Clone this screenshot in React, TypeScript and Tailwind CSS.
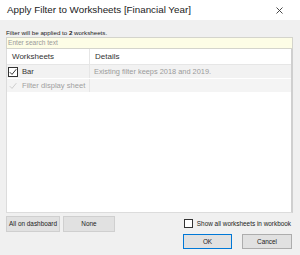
import React from "react";

const font = { fontFamily: '"Liberation Sans", Arial, sans-serif' };

function Check({ disabled }: { disabled?: boolean }) {
  return (
    <div
      className={
        "w-[10px] h-[10px] flex items-center justify-center shrink-0 " +
        (disabled ? "border border-transparent" : "border border-[#333333] bg-white")
      }
    >
      <svg width="8" height="8" viewBox="0 0 8 8">
        <path
          d="M0.8 4.2 L3 6.4 L7.3 1.2"
          fill="none"
          stroke={disabled ? "#c8c8c8" : "#222222"}
          strokeWidth="0.9"
        />
      </svg>
    </div>
  );
}

export default function App() {
  return (
    <div
      className="w-[300px] h-[255px] bg-[#f0f0f0] flex flex-col text-black overflow-hidden"
      style={font}
    >
      <div className="h-[20px] bg-white flex items-center justify-between pl-[7px] pr-[17px] shrink-0">
        <span className="text-[9.8px] text-[#222]">Apply Filter to Worksheets [Financial Year]</span>
        <svg width="7" height="7" viewBox="0 0 7 7">
          <path d="M0.5 0.5 L6.5 6.5 M6.5 0.5 L0.5 6.5" stroke="#333" strokeWidth="0.9" />
        </svg>
      </div>
      <div className="flex flex-col pl-[6px] pr-[7px] flex-1">
        <div className="mt-[8px] h-[9px] flex items-center text-[6.2px] text-[#222]">
          <span>
            Filter will be applied to <b>2</b> worksheets.
          </span>
        </div>
        <div className="h-[12px] border border-[#d4d4cc] bg-[#fdfde6] flex items-center pl-[1px] text-[6.6px] text-[#9a9a9a]">
          Enter search text
        </div>
        <div className="h-[164px] bg-white border-l border-[#dcdcdc] border-r-2 border-r-[#cfcfcf] border-b border-b-[#dcdcdc] flex flex-col">
          <div className="h-[16px] flex items-center border-b border-[#e6e6e6] text-[8px] text-[#333]">
            <div className="w-[83px] pl-[5px] h-full flex items-center border-r border-[#e6e6e6]">Worksheets</div>
            <div className="pl-[5px]">Details</div>
          </div>
          <div className="h-[14px] flex items-center bg-[#f2f2f2] border-b border-white">
            <div className="w-[83px] pl-[1px] h-full flex items-center gap-[4px] border-r border-[#e6e6e6] text-[7.6px] text-[#333]">
              <Check />
              <span>Bar</span>
            </div>
            <div className="pl-[4px] text-[7.4px] text-[#9a9a9a]">Existing filter keeps 2018 and 2019.</div>
          </div>
          <div className="h-[13px] flex items-center bg-[#f4f4f4]">
            <div className="w-[83px] pl-[1px] h-full flex items-center gap-[4px] border-r border-[#e6e6e6] text-[7.6px] text-[#a0a0a0]">
              <Check disabled />
              <span className="whitespace-nowrap">Filter display sheet</span>
            </div>
          </div>
        </div>
        <div className="mt-[3px] h-[16px] flex items-center">
          <div className="w-[54px] h-[16px] bg-[#e1e1e1] border border-[#cfcfcf] flex items-center justify-center text-[6.4px] text-[#222]">
            All on dashboard
          </div>
          <div className="ml-[3px] w-[52px] h-[16px] bg-[#e1e1e1] border border-[#cfcfcf] flex items-center justify-center text-[6.4px] text-[#222]">
            None
          </div>
          <div className="ml-auto flex items-center gap-[4px] pr-[2px]">
            <div className="w-[9px] h-[9px] border border-[#333] bg-white" />
            <span className="text-[6.4px] text-[#222]">Show all worksheets in workbook</span>
          </div>
        </div>
        <div className="mt-[2px] h-[15px] flex justify-end gap-[10px] pr-[1px]">
          <div className="w-[49px] h-[15px] bg-[#e1e1e1] border border-[#0078d7] flex items-center justify-center text-[6.4px] text-[#222]">
            OK
          </div>
          <div className="w-[50px] h-[15px] bg-[#e1e1e1] border border-[#adadad] flex items-center justify-center text-[6.4px] text-[#222]">
            Cancel
          </div>
        </div>
      </div>
    </div>
  );
}
